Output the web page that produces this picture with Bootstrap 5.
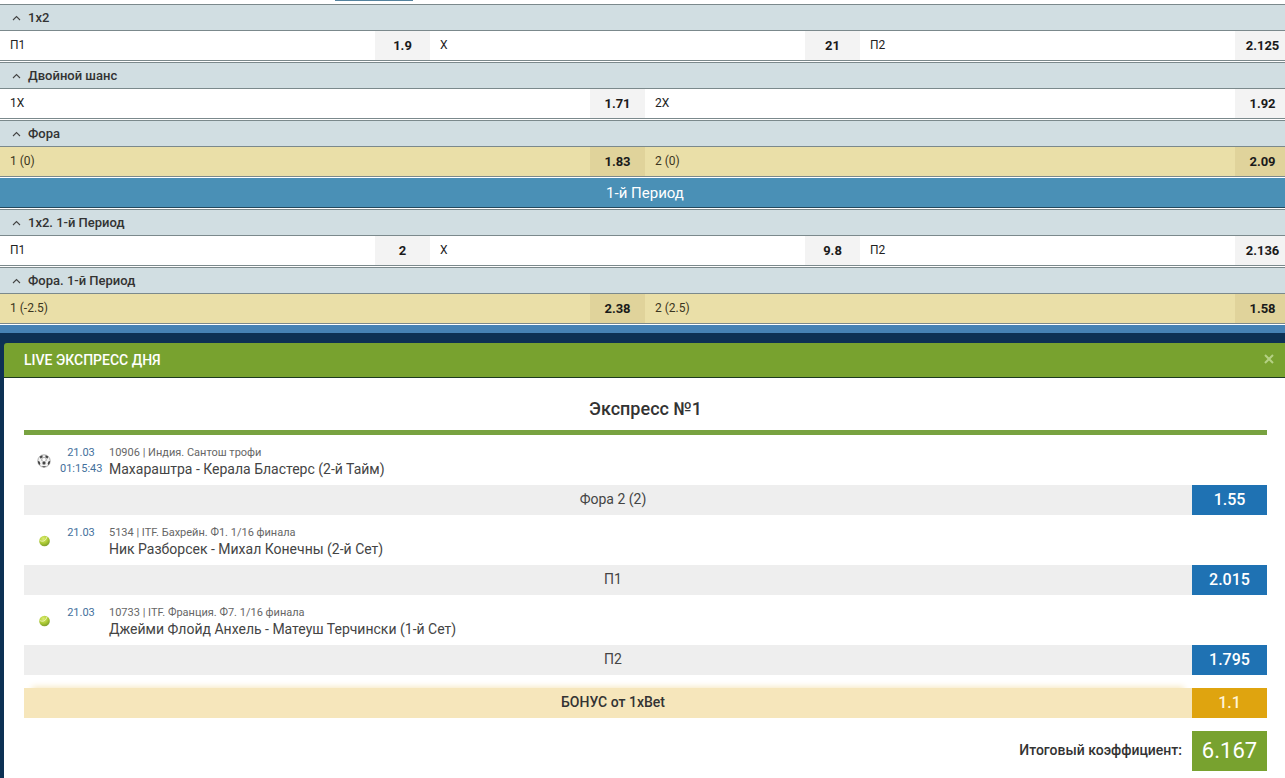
<!DOCTYPE html>
<html lang="ru">
<head>
<meta charset="utf-8">
<meta name="viewport" content="width=device-width, initial-scale=1">
<title>Live экспресс дня</title>
<link href="https://cdn.jsdelivr.net/npm/bootstrap@5.3.0/dist/css/bootstrap.min.css" rel="stylesheet">
<style>
body{font-family:Roboto,"Liberation Sans",sans-serif;font-size:12px;color:#333;background:#fff}
.page-clip{overflow:hidden}
.page-wide{margin-right:-5px}
.tab-strip{height:4px;padding-left:335px}
.tab-mark{width:78px;height:1px;background:#55839e}
.market{border-top:1px solid #7b898c;border-bottom:1px solid #7b898c;margin-bottom:1px}
.market-head{height:26px;padding:0 12px;gap:7px;background:#d1dee2;border:0;border-bottom:1px solid #7b898c;font-size:13px;font-weight:500;line-height:25px;color:#333}
.outcome{height:29px;color:#222}
.outcome-name{padding-left:10px;line-height:28px}
.odd{width:55px;border:0;padding:0;background:#f3f3f3;font-size:13px;line-height:29px;font-weight:700;color:#1a1a1a}
.market-hot .outcome{background:#eadfa8;color:#3b3520}
.market-hot .odd{background:#e0d39b;color:#1a1a1a}
.period{height:30px;background:#4a90b6;border-bottom:1px solid #23485c;margin-bottom:1px;color:#fff;font-size:15px;line-height:30px}
.express-frame{background:#0d3154;border-top:8px solid #4682b4;padding:10px 0 0 4px}
.express-head{height:35px;background:#78a22f;border-bottom:1px solid #1d3a20;border-radius:3px 3px 0 0;padding:0 15px 0 20px;color:#fff}
.express-head h2{font-size:14px;font-weight:500;line-height:35px}
.close-x{border:0;background:none;padding:0;width:12px;height:32px;color:#b5d184}
.express-body{background:#fff;padding:0 23px 8px 20px}
.express-title{font-size:18px;font-weight:500;line-height:62px;height:52px}
.rule{height:5px;background:#78a240}
.event{height:50px}
.event-icon{width:36px;padding:2px 0 0 3px}
.event-time{width:42px;font-size:11px;line-height:16px;color:#44709c;padding-top:10px}
.event-info{padding:10px 0 0 7px;font-size:11px;line-height:16px;color:#666}
.event-name{font-size:14px;color:#444}
.pick{height:30px;background:#eee;font-size:14px;line-height:28px;color:#444}
.pick-name{padding-left:10px}
.pick-odd{width:75px;background:#1f72b3;color:#fff;font-size:16px;font-weight:500;line-height:30px}
.bonus{margin:13px 0;background:#f6e6bb;font-weight:500;color:#333}
.bonus .pick-name{box-shadow:0 -9px 6px -8px #f6e6bb}
.bonus .pick-odd{background:#dfa40f;color:#fff4d6}
.total{font-size:14px;font-weight:500;line-height:38px;color:#333}
.total-odd{width:75px;height:40px;margin-left:10px;background:#78a22f;color:#fff;font-size:22px;font-weight:400;line-height:40px}
</style>
</head>
<body>
<div class="page-clip"><div class="page-wide">
<div class="tab-strip"><div class="tab-mark"></div></div>

<section class="market">
<button class="market-head d-flex align-items-center w-100 text-start"><svg width="9" height="6" viewBox="0 0 9 6" fill="none" stroke="#444" stroke-width="1.1"><path d="M1 5 4.500 1.500 8 5"/></svg><span>1x2</span></button>
<div class="row g-0">
<div class="col outcome d-flex"><span class="outcome-name flex-grow-1">П1</span><button class="odd">1.9</button></div>
<div class="col outcome d-flex"><span class="outcome-name flex-grow-1">X</span><button class="odd">21</button></div>
<div class="col outcome d-flex"><span class="outcome-name flex-grow-1">П2</span><button class="odd">2.125</button></div>
</div>
</section>

<section class="market">
<button class="market-head d-flex align-items-center w-100 text-start"><svg width="9" height="6" viewBox="0 0 9 6" fill="none" stroke="#444" stroke-width="1.1"><path d="M1 5 4.500 1.500 8 5"/></svg><span>Двойной шанс</span></button>
<div class="row g-0">
<div class="col outcome d-flex"><span class="outcome-name flex-grow-1">1X</span><button class="odd">1.71</button></div>
<div class="col outcome d-flex"><span class="outcome-name flex-grow-1">2X</span><button class="odd">1.92</button></div>
</div>
</section>

<section class="market market-hot">
<button class="market-head d-flex align-items-center w-100 text-start"><svg width="9" height="6" viewBox="0 0 9 6" fill="none" stroke="#444" stroke-width="1.1"><path d="M1 5 4.500 1.500 8 5"/></svg><span>Фора</span></button>
<div class="row g-0">
<div class="col outcome d-flex"><span class="outcome-name flex-grow-1">1 (0)</span><button class="odd">1.83</button></div>
<div class="col outcome d-flex"><span class="outcome-name flex-grow-1">2 (0)</span><button class="odd">2.09</button></div>
</div>
</section>

<div class="period text-center">1-й Период</div>

<section class="market">
<button class="market-head d-flex align-items-center w-100 text-start"><svg width="9" height="6" viewBox="0 0 9 6" fill="none" stroke="#444" stroke-width="1.1"><path d="M1 5 4.500 1.500 8 5"/></svg><span>1x2. 1-й Период</span></button>
<div class="row g-0">
<div class="col outcome d-flex"><span class="outcome-name flex-grow-1">П1</span><button class="odd">2</button></div>
<div class="col outcome d-flex"><span class="outcome-name flex-grow-1">X</span><button class="odd">9.8</button></div>
<div class="col outcome d-flex"><span class="outcome-name flex-grow-1">П2</span><button class="odd">2.136</button></div>
</div>
</section>

<section class="market market-hot">
<button class="market-head d-flex align-items-center w-100 text-start"><svg width="9" height="6" viewBox="0 0 9 6" fill="none" stroke="#444" stroke-width="1.1"><path d="M1 5 4.500 1.500 8 5"/></svg><span>Фора. 1-й Период</span></button>
<div class="row g-0">
<div class="col outcome d-flex"><span class="outcome-name flex-grow-1">1 (-2.5)</span><button class="odd">2.38</button></div>
<div class="col outcome d-flex"><span class="outcome-name flex-grow-1">2 (2.5)</span><button class="odd">1.58</button></div>
</div>
</section>

<section class="express-frame">
<header class="express-head d-flex justify-content-between">
<h2 class="m-0">LIVE ЭКСПРЕСС ДНЯ</h2>
<button class="close-x d-flex align-items-center justify-content-center" aria-label="Закрыть"><svg width="10" height="10" viewBox="0 0 10 10" stroke="currentColor" stroke-width="2"><path d="M1 1 9 9M9 1 1 9"/></svg></button>
</header>
<div class="express-body">
<h3 class="express-title text-center m-0">Экспресс №1</h3>
<div class="rule"></div>

<article>
<div class="event d-flex">
<div class="event-icon d-flex align-items-center justify-content-center"><svg width="14" height="14" viewBox="0 0 14 14"><circle cx="7" cy="7" r="6.200" fill="#f2f2f2" stroke="#999" stroke-width=".8"/><path d="M4.600 6.400 7 7.800 9.400 6.400 8.600 3.600H5.400Z" fill="#fff" stroke="#777" stroke-width=".6"/><path d="M2.600 2.600 5.400 1.200 5.600 3 3.600 4.800ZM11.400 2.600 8.600 1.200 8.400 3 10.400 4.800ZM.9 7 2.600 7.600 3.400 10 2.300 11 1.100 9ZM13.100 7 11.400 7.600 10.600 10 11.700 11 12.900 9ZM5.300 8.600 7 7.600 8.700 8.600 8.200 10.600H5.800ZM4.600 12.300H9.400L7 13.400Z" fill="#444"/></svg></div>
<div class="event-time text-center">21.03<br>01:15:43</div>
<div class="event-info"><div>10906 | Индия. Сантош трофи</div><div class="event-name">Махараштра - Керала Бластерс (2-й Тайм)</div></div>
</div>
<div class="pick d-flex text-center"><span class="pick-name flex-grow-1">Фора 2 (2)</span><span class="pick-odd">1.55</span></div>
</article>

<article>
<div class="event d-flex">
<div class="event-icon d-flex align-items-center justify-content-center"><svg width="12" height="12" viewBox="0 0 12 12"><defs><radialGradient id="felt" cx=".4" cy=".3" r=".75"><stop offset="0" stop-color="#dced72"/><stop offset=".55" stop-color="#adcb35"/><stop offset="1" stop-color="#789829"/></radialGradient></defs><circle cx="6.500" cy="6" r="5.300" fill="url(#felt)"/><path d="M1.500 5C4 7.500 8 6 9 1.800" fill="none" stroke="#f0f6be" stroke-width=".9"/></svg></div>
<div class="event-time text-center">21.03</div>
<div class="event-info"><div>5134 | ITF. Бахрейн. Ф1. 1/16 финала</div><div class="event-name">Ник Разборсек - Михал Конечны (2-й Сет)</div></div>
</div>
<div class="pick d-flex text-center"><span class="pick-name flex-grow-1">П1</span><span class="pick-odd">2.015</span></div>
</article>

<article>
<div class="event d-flex">
<div class="event-icon d-flex align-items-center justify-content-center"><svg width="12" height="12" viewBox="0 0 12 12"><circle cx="6.500" cy="6" r="5.300" fill="url(#felt)"/><path d="M1.500 5C4 7.500 8 6 9 1.800" fill="none" stroke="#f0f6be" stroke-width=".9"/></svg></div>
<div class="event-time text-center">21.03</div>
<div class="event-info"><div>10733 | ITF. Франция. Ф7. 1/16 финала</div><div class="event-name">Джейми Флойд Анхель - Матеуш Терчински (1-й Сет)</div></div>
</div>
<div class="pick d-flex text-center"><span class="pick-name flex-grow-1">П2</span><span class="pick-odd">1.795</span></div>
</article>

<div class="pick bonus d-flex text-center"><span class="pick-name flex-grow-1">БОНУС от 1xBet</span><span class="pick-odd">1.1</span></div>
<div class="total d-flex justify-content-end"><span>Итоговый коэффициент:</span><span class="total-odd text-center">6.167</span></div>
</div>
</section>
</div></div>
<script src="https://cdn.jsdelivr.net/npm/bootstrap@5.3.0/dist/js/bootstrap.bundle.min.js"></script>
</body>
</html>
